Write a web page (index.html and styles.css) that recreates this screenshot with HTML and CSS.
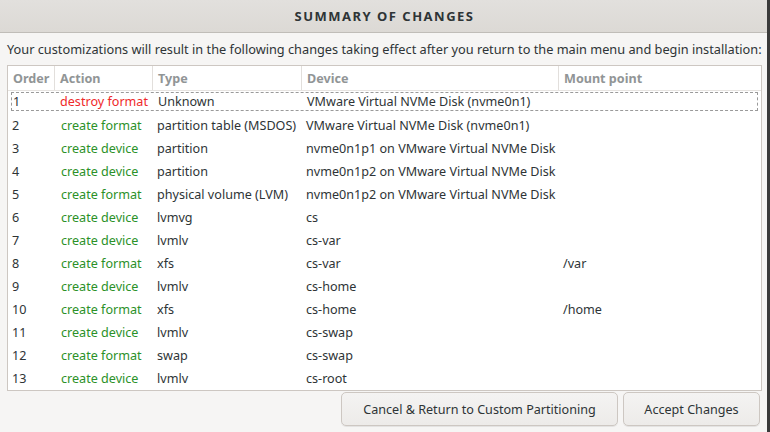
FILE: index.html
```html
<!DOCTYPE html>
<html>
<head>
<meta charset="utf-8">
<link rel="stylesheet" href="styles.css">
</head>
<body>
<div class="dialog">
  <header class="titlebar"><h1>SUMMARY OF CHANGES</h1></header>
  <main class="content">
    <p class="intro">Your customizations will result in the following changes taking effect after you return to the main menu and begin installation:</p>
    <div class="table">
      <div class="row head">
        <div class="c order">Order</div><div class="c action">Action</div><div class="c type">Type</div><div class="c device">Device</div><div class="c mount">Mount point</div>
      </div>
      <div class="row focus"><div class="c order">1</div><div class="c action destroy">destroy format</div><div class="c type">Unknown</div><div class="c device">VMware Virtual NVMe Disk (nvme0n1)</div><div class="c mount"></div></div>
      <div class="row"><div class="c order">2</div><div class="c action create">create format</div><div class="c type">partition table (MSDOS)</div><div class="c device">VMware Virtual NVMe Disk (nvme0n1)</div><div class="c mount"></div></div>
      <div class="row"><div class="c order">3</div><div class="c action create">create device</div><div class="c type">partition</div><div class="c device">nvme0n1p1 on VMware Virtual NVMe Disk</div><div class="c mount"></div></div>
      <div class="row"><div class="c order">4</div><div class="c action create">create device</div><div class="c type">partition</div><div class="c device">nvme0n1p2 on VMware Virtual NVMe Disk</div><div class="c mount"></div></div>
      <div class="row"><div class="c order">5</div><div class="c action create">create format</div><div class="c type">physical volume (LVM)</div><div class="c device">nvme0n1p2 on VMware Virtual NVMe Disk</div><div class="c mount"></div></div>
      <div class="row"><div class="c order">6</div><div class="c action create">create device</div><div class="c type">lvmvg</div><div class="c device">cs</div><div class="c mount"></div></div>
      <div class="row"><div class="c order">7</div><div class="c action create">create device</div><div class="c type">lvmlv</div><div class="c device">cs-var</div><div class="c mount"></div></div>
      <div class="row"><div class="c order">8</div><div class="c action create">create format</div><div class="c type">xfs</div><div class="c device">cs-var</div><div class="c mount">/var</div></div>
      <div class="row"><div class="c order">9</div><div class="c action create">create device</div><div class="c type">lvmlv</div><div class="c device">cs-home</div><div class="c mount"></div></div>
      <div class="row"><div class="c order">10</div><div class="c action create">create format</div><div class="c type">xfs</div><div class="c device">cs-home</div><div class="c mount">/home</div></div>
      <div class="row"><div class="c order">11</div><div class="c action create">create device</div><div class="c type">lvmlv</div><div class="c device">cs-swap</div><div class="c mount"></div></div>
      <div class="row"><div class="c order">12</div><div class="c action create">create format</div><div class="c type">swap</div><div class="c device">cs-swap</div><div class="c mount"></div></div>
      <div class="row"><div class="c order">13</div><div class="c action create">create device</div><div class="c type">lvmlv</div><div class="c device">cs-root</div><div class="c mount"></div></div>
    </div>
    <div class="buttons">
      <button class="btn cancel">Cancel &amp; Return to Custom Partitioning</button>
      <button class="btn accept">Accept Changes</button>
    </div>
  </main>
</div>
</body>
</html>
```

FILE: styles.css
```css
* { box-sizing: border-box; }
html, body { margin: 0; padding: 0; }
body {
  width: 770px; height: 432px; overflow: hidden;
  font-family: "Noto Sans", "DejaVu Sans", sans-serif;
  font-size: 12.6px; color: #2e3436;
  background: #f6f5f4;
}
.dialog {
  height: 432px;
  display: flex; flex-direction: column;
  border-right: 3px solid #3a3a3a;
  background: #f6f5f4;
}
.titlebar {
  height: 33px;
  background: linear-gradient(#e2e0dd, #dcd9d5);
  border-bottom: 1px solid #c0bdb8;
  display: flex; align-items: center; justify-content: center;
}
.titlebar h1 {
  margin: 0; font-size: 13px; font-weight: bold; letter-spacing: 1.5px;
  color: #2e3436; padding-left: 2px;
}
.content { padding: 7px 5px 0 7px; display: flex; flex-direction: column; }
.intro { margin: 0 0 7px 0; line-height: 18px; white-space: nowrap; font-size: 12.75px; }
.table {
  height: 326px; background: #fff;
  border: 1px solid #cdc7c2;
  display: flex; flex-direction: column;
}
.row { display: flex; height: 23px; align-items: center; }
.row.head { height: 25px; border-bottom: 1px solid #e6e3e0; color: #919596; font-weight: bold; }
.row.head .c { height: 100%; display: flex; align-items: center; border-right: 1px solid #e2dfdc; padding-left: 5px; }
.row.head .c:last-child { border-right: none; }
.c { white-space: nowrap; padding-left: 4px; }
.order { width: 47px; }
.action { width: 98px; padding-left: 6px; }
.type { width: 149px; }
.device { width: 257px; }
.mount { flex: 1; }
.destroy { color: #ef2929; }
.create { color: #2b9128; }
.row.focus { margin: 1px 3px 3px 3px; height: 19px; border: 1px dashed #9a9a9a; }
.row.focus .order { width: 42px; padding-left: 1px; }
.row.focus .action { width: 100px; }
.buttons { display: flex; justify-content: flex-end; gap: 5px; margin-top: 1px; padding-right: 2px; }
.btn {
  height: 34px; font: inherit; color: #2e3436;
  background: linear-gradient(#f4f3f2, #edebe9);
  border: 1px solid #cdc7c2; border-radius: 5px;
  box-shadow: 0 1px 0 rgba(0,0,0,0.07);
}
.cancel { width: 277px; }
.accept { width: 137px; }
```
